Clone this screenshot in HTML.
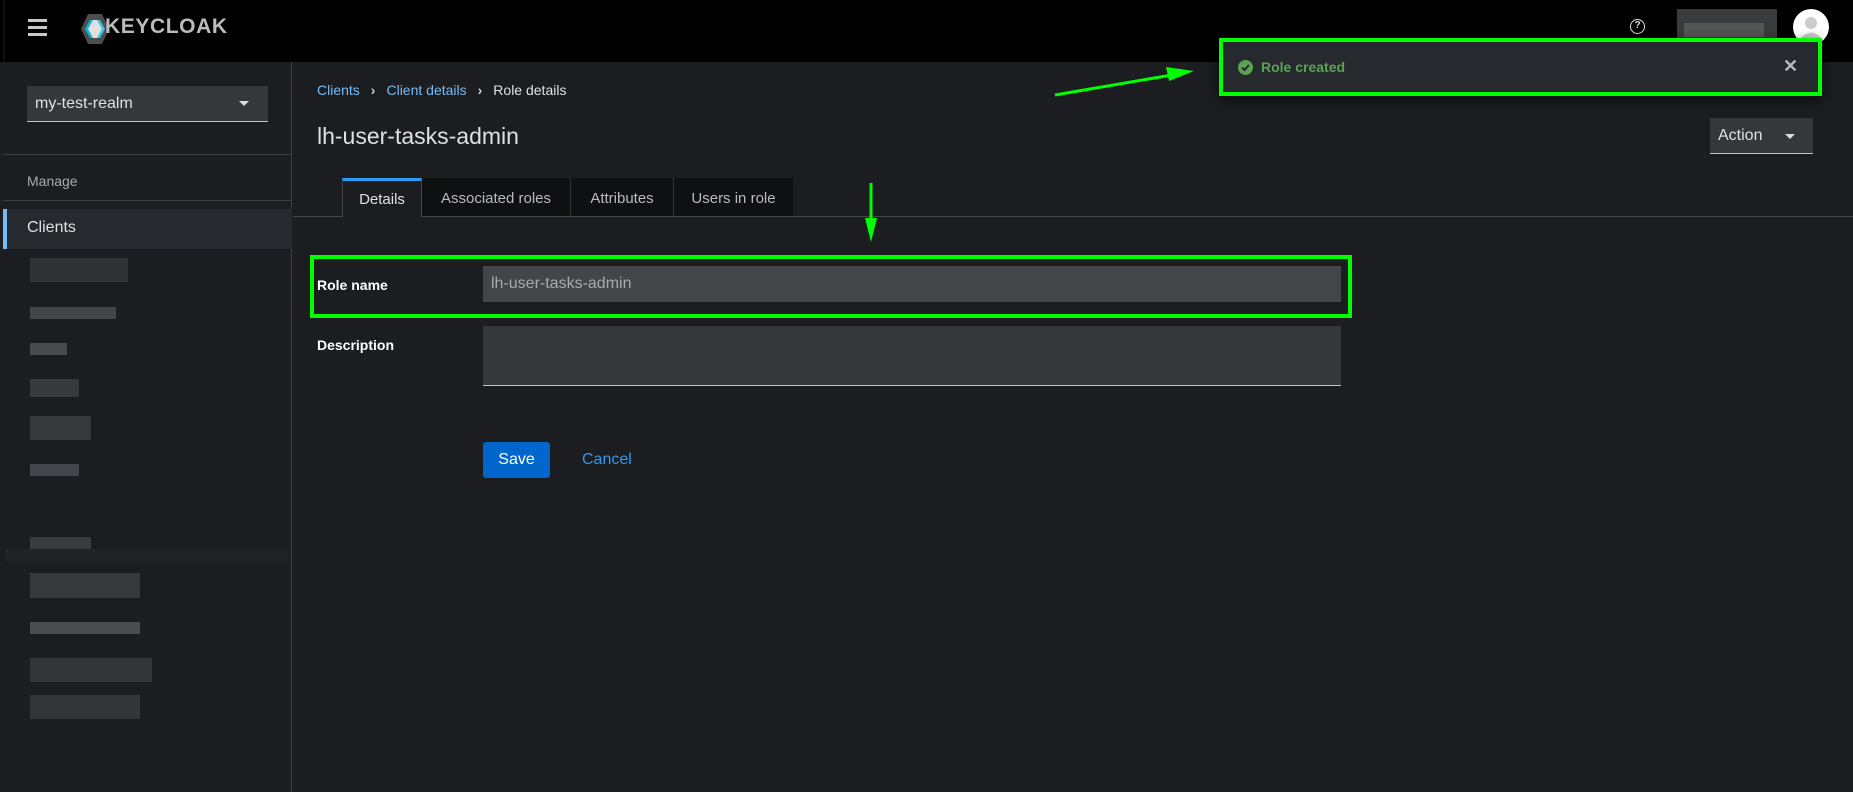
<!DOCTYPE html>
<html><head><meta charset="utf-8"><style>
*{box-sizing:border-box;margin:0;padding:0}
body{width:1853px;height:792px;overflow:hidden;background:#1b1d21;font-family:"Liberation Sans",sans-serif;color:#e0e0e0;position:relative}
.abs{position:absolute}
.hdr{left:0;top:0;width:1853px;height:62px;background:#000}
.side{left:0;top:62px;width:292px;height:730px;background:#1b1d21;border-right:1px solid #3c3f42}
.b{position:absolute;height:12px}
</style></head><body>
<div class="abs hdr"></div>
<div class="abs" style="left:3px;top:0;width:2px;height:792px;background:#0e0f11"></div>
<div class="abs" style="left:28px;top:19px;width:19px;height:3px;background:#c8c8c8"></div>
<div class="abs" style="left:28px;top:26px;width:19px;height:3px;background:#c8c8c8"></div>
<div class="abs" style="left:28px;top:33px;width:19px;height:3px;background:#c8c8c8"></div>
<svg class="abs" style="left:79px;top:13px" width="32" height="32" viewBox="0 0 30 32">
<polygon points="8,1 22,1 29,16 22,31 8,31 1,16" fill="#4d4d4d"/>
<polygon points="5,16 10,7 13,7 8,16 13,25 10,25" fill="#00b8e3"/>
<polygon points="25,16 20,7 17,7 22,16 17,25 20,25" fill="#33c6e9"/>
<polygon points="8,16 13,7 17,7 22,16 17,25 13,25" fill="#e0e0e0"/>
</svg>
<div class="abs" style="left:105px;top:15px;font-size:21px;font-weight:bold;color:#bbb;letter-spacing:0.6px">KEYCLOAK</div>
<div class="abs" style="left:1630px;top:19px;width:15px;height:15px;border:1.5px solid #ddd;border-radius:50%;font-size:10px;font-weight:bold;text-align:center;line-height:12px;color:#ddd">?</div>
<div class="abs" style="left:1677px;top:9px;width:100px;height:42px;background:#3a3b3d"></div>
<div class="abs" style="left:1684px;top:23px;width:80px;height:14px;background:#555"></div>
<svg class="abs" style="left:1793px;top:9px" width="36" height="36"><circle cx="18" cy="18" r="18" fill="#fff"/><circle cx="18" cy="14" r="6" fill="#ccc"/><path d="M7 30 Q18 17 29 30 Q18 38 7 30Z" fill="#ccc"/></svg>
<div class="abs side"></div>
<div class="abs" style="left:27px;top:86px;width:241px;height:36px;background:#36373a;border-bottom:1px solid #c4c4c4;font-size:16px;padding:9px 8px;color:#e0e0e0">my-test-realm</div>
<div class="abs" style="left:239px;top:101px;width:0;height:0;border-left:5px solid transparent;border-right:5px solid transparent;border-top:5px solid #ddd"></div>
<div class="abs" style="left:3px;top:154px;width:289px;height:1px;background:#3c3f42"></div>
<div class="abs" style="left:27px;top:173px;font-size:14px;color:#aaa">Manage</div>
<div class="abs" style="left:3px;top:200px;width:289px;height:1px;background:#3c3f42"></div>
<div class="abs" style="left:3px;top:209px;width:289px;height:40px;background:#26292d"></div>
<div class="abs" style="left:3px;top:209px;width:4px;height:40px;background:#73bcf7"></div>
<div class="abs" style="left:27px;top:219px;font-size:16px;color:#e0e0e0">Clients</div>
<div class="b" style="left:30px;top:258px;width:98px;height:24px;background:#303236"></div>
<div class="b" style="left:30px;top:307px;width:86px;background:#444548"></div>
<div class="b" style="left:30px;top:343px;width:37px;background:#48494c"></div>
<div class="b" style="left:30px;top:379px;width:49px;height:18px;background:#38393c"></div>
<div class="b" style="left:30px;top:416px;width:61px;height:24px;background:#37383b"></div>
<div class="b" style="left:30px;top:464px;width:49px;background:#44454a"></div>
<div class="b" style="left:30px;top:537px;width:61px;background:#3a3b3e"></div>
<div class="abs" style="left:5px;top:549px;width:283px;height:12px;background:#212327"></div>
<div class="b" style="left:30px;top:573px;width:110px;height:25px;background:#37383b"></div>
<div class="b" style="left:30px;top:622px;width:110px;background:#4b4c4f"></div>
<div class="b" style="left:30px;top:658px;width:122px;height:24px;background:#333538"></div>
<div class="b" style="left:30px;top:695px;width:110px;height:24px;background:#343538"></div>
<div class="abs" style="left:317px;top:82px;font-size:14px"><span style="color:#73bcf7">Clients</span><span style="color:#ccc;margin:0 11px;font-weight:bold">›</span><span style="color:#73bcf7">Client details</span><span style="color:#ccc;margin:0 11px;font-weight:bold">›</span><span style="color:#e0e0e0">Role details</span></div>
<div class="abs" style="left:317px;top:123px;font-size:23px;color:#e0e0e0">lh-user-tasks-admin</div>
<div class="abs" style="left:1710px;top:118px;width:103px;height:36px;background:#36373a;border-bottom:1px solid #c4c4c4;font-size:16px;padding:9px 8px;color:#e0e0e0">Action</div>
<div class="abs" style="left:1785px;top:134px;border-left:5px solid transparent;border-right:5px solid transparent;border-top:5px solid #ddd"></div>
<div class="abs" style="left:293px;top:216px;width:1560px;height:1px;background:#444548"></div>
<div class="abs" style="left:342px;top:178px;width:80px;height:39px;background:#1b1d21;border-top:3px solid #2b9af3;border-left:1px solid #444548;border-right:1px solid #444548;font-size:15px;padding:10px 0 0;text-align:center;color:#e0e0e0">Details</div>
<div class="abs" style="left:422px;top:178px;width:149px;height:38px;background:#0f1012;font-size:15px;padding:12px 0 0;text-align:center;color:#bbb;border-right:1px solid #333">Associated roles</div>
<div class="abs" style="left:571px;top:178px;width:103px;height:38px;background:#0f1012;font-size:15px;padding:12px 0 0;text-align:center;color:#bbb;border-right:1px solid #333">Attributes</div>
<div class="abs" style="left:674px;top:178px;width:119px;height:38px;background:#0f1012;font-size:15px;padding:12px 0 0;text-align:center;color:#bbb">Users in role</div>
<div class="abs" style="left:317px;top:277px;font-size:14px;font-weight:bold;color:#fff">Role name</div>
<div class="abs" style="left:483px;top:266px;width:858px;height:36px;background:#444548;font-size:16px;padding:9px 8px;color:#aaa">lh-user-tasks-admin</div>
<div class="abs" style="left:310px;top:255px;width:1042px;height:63px;border:4px solid #00ff00"></div>
<div class="abs" style="left:317px;top:337px;font-size:14px;font-weight:bold;color:#fff">Description</div>
<div class="abs" style="left:483px;top:326px;width:858px;height:60px;background:#36373a;border-bottom:1px solid #c4c4c4"></div>
<div class="abs" style="left:483px;top:442px;width:67px;height:36px;background:#0066cc;border-radius:3px;font-size:16px;color:#fff;text-align:center;padding-top:9px">Save</div>
<div class="abs" style="left:582px;top:451px;font-size:16px;color:#2b9af3">Cancel</div>
<svg class="abs" style="left:0;top:0" width="1853" height="792">
<line x1="871" y1="183" x2="871" y2="222" stroke="#00ff00" stroke-width="3"/>
<polygon points="865,218 877,218 871,242" fill="#00ff00"/>
<line x1="1055" y1="95" x2="1172" y2="75" stroke="#00ff00" stroke-width="3"/>
<polygon points="1166,67 1169,81 1194,71" fill="#00ff00"/>
</svg>
<div class="abs" style="left:1219px;top:38px;width:603px;height:58px;background:#26292d;border:4px solid #00ff00;box-shadow:0 4px 12px rgba(0,0,0,.6)"></div>
<svg class="abs" style="left:1238px;top:60px" width="15" height="15"><circle cx="7.5" cy="7.5" r="7.5" fill="#5ba352"/><path d="M4 7.5 L6.5 10 L11 5" stroke="#26292d" stroke-width="2" fill="none"/></svg>
<div class="abs" style="left:1261px;top:59px;font-size:14px;font-weight:bold;color:#5ba352">Role created</div>
<div class="abs" style="left:1783px;top:56px;font-size:18px;font-weight:bold;color:#bbb">✕</div>
</body></html>
